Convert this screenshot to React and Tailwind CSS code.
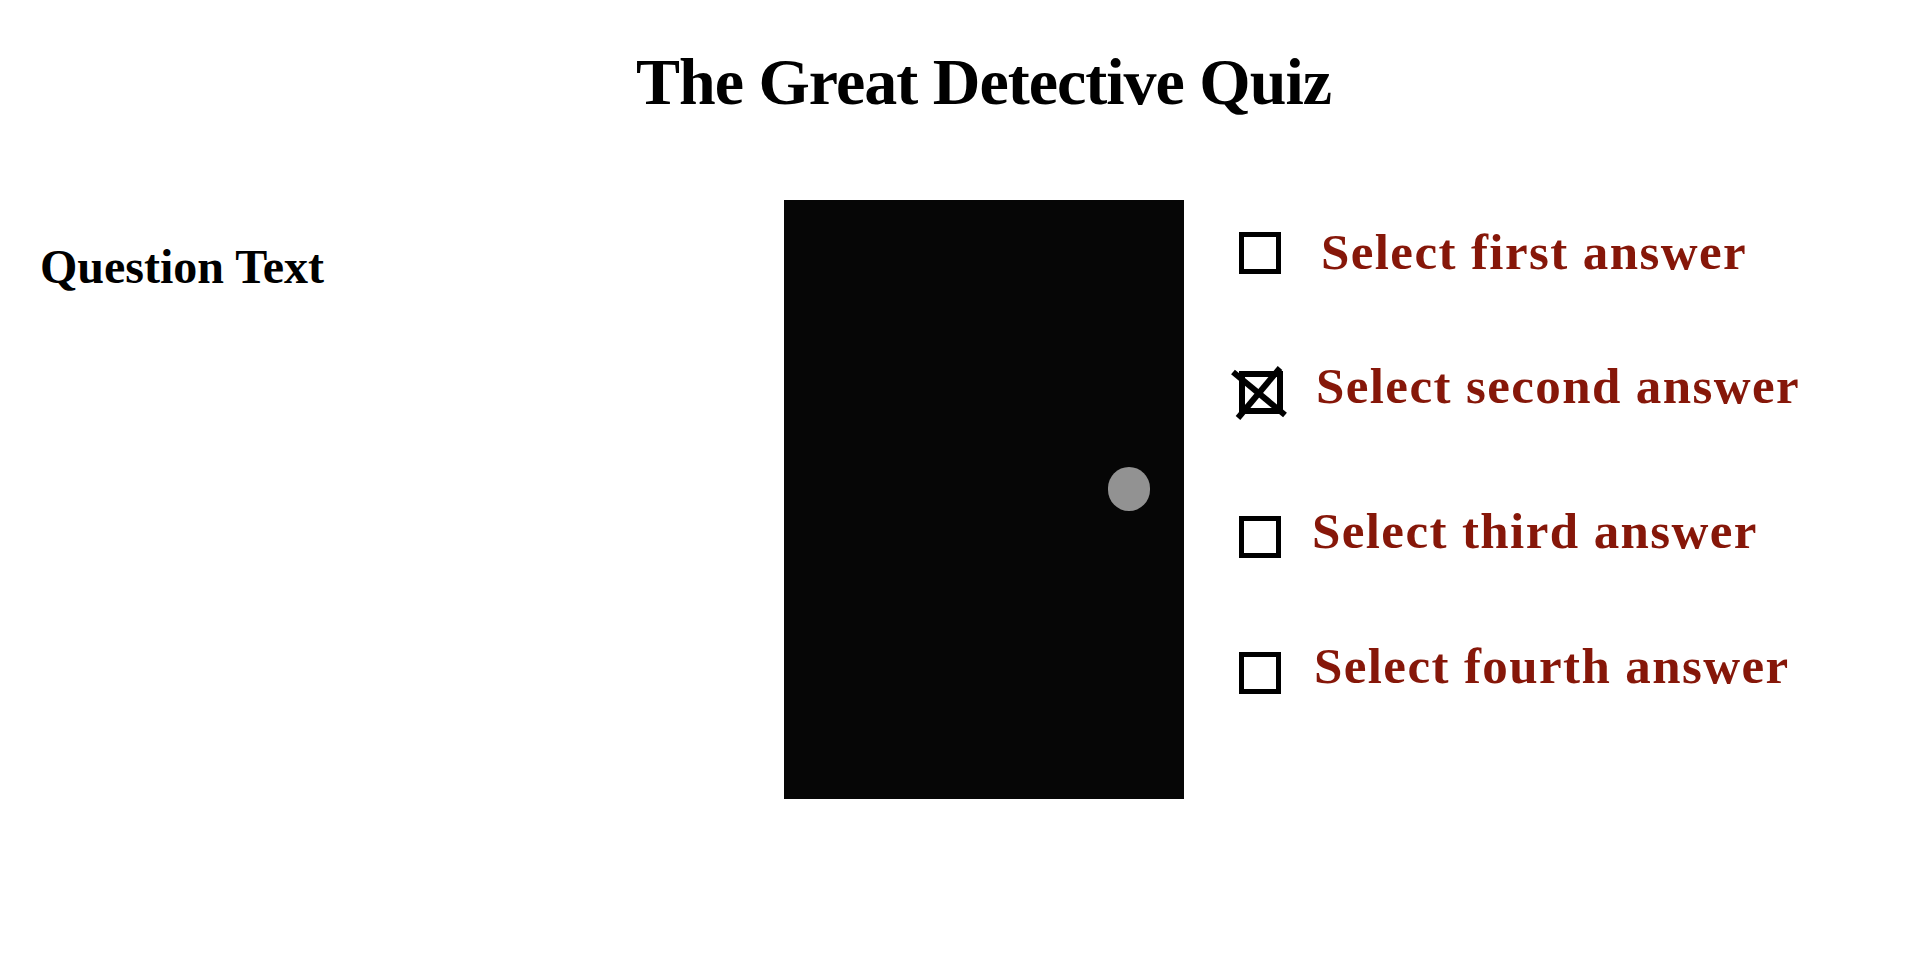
const answers = [
  { label: 'Select first answer', checked: false, rowClass: 'h-[42px]', textClass: 'ml-[40px] -mt-px' },
  { label: 'Select second answer', checked: true, rowClass: 'h-[55px] mt-[91px]', textClass: 'ml-[26px] mt-0' },
  { label: 'Select third answer', checked: false, rowClass: 'h-[42px] mt-[96px]', textClass: 'ml-[31px] -mt-[6px]' },
  { label: 'Select fourth answer', checked: false, rowClass: 'h-[42px] mt-[94px]', textClass: 'ml-[33px] -mt-[7px]' },
];

function CheckedBox() {
  return (
    <svg width="60" height="55" viewBox="0 0 60 55" className="-ml-[9px] shrink-0">
      <rect x="12" y="9" width="38" height="37" fill="none" stroke="#000" strokeWidth="6" />
      <line x1="3" y1="7" x2="55" y2="50" stroke="#000" strokeWidth="6" />
      <line x1="50" y1="3" x2="8" y2="53" stroke="#000" strokeWidth="6" />
    </svg>
  );
}

export default function App() {
  return (
    <div className="min-h-[960px] w-[1932px] bg-white font-['Liberation_Serif',serif]">
      <div className="pt-[49px] pl-[636px]">
        <h1 className="text-[66px] leading-[66px] font-bold tracking-[-1px] text-black whitespace-nowrap">
          The Great Detective Quiz
        </h1>
      </div>

      <div className="flex items-start mt-[85px]">
        <div className="w-[784px] shrink-0 pl-[40px] pt-[43px]">
          <h2 className="text-[48px] leading-[48px] font-bold text-black">Question Text</h2>
        </div>

        <div className="w-[400px] h-[599px] shrink-0 bg-[#060606] flex justify-end items-start pt-[267px] pr-[34px]">
          <div className="w-[42px] h-[44px] rounded-full bg-[#929292]" />
        </div>

        <div className="ml-[55px] pt-[32px] flex flex-col">
          {answers.map((a) => (
            <div key={a.label} className={`flex items-start ${a.rowClass}`}>
              {a.checked ? (
                <CheckedBox />
              ) : (
                <div className="w-[42px] h-[42px] shrink-0 border-[5px] border-black bg-white" />
              )}
              <span
                className={`text-[51px] leading-[42px] font-bold tracking-[1.4px] text-[#861709] whitespace-nowrap ${a.textClass}`}
              >
                {a.label}
              </span>
            </div>
          ))}
        </div>
      </div>
    </div>
  );
}
